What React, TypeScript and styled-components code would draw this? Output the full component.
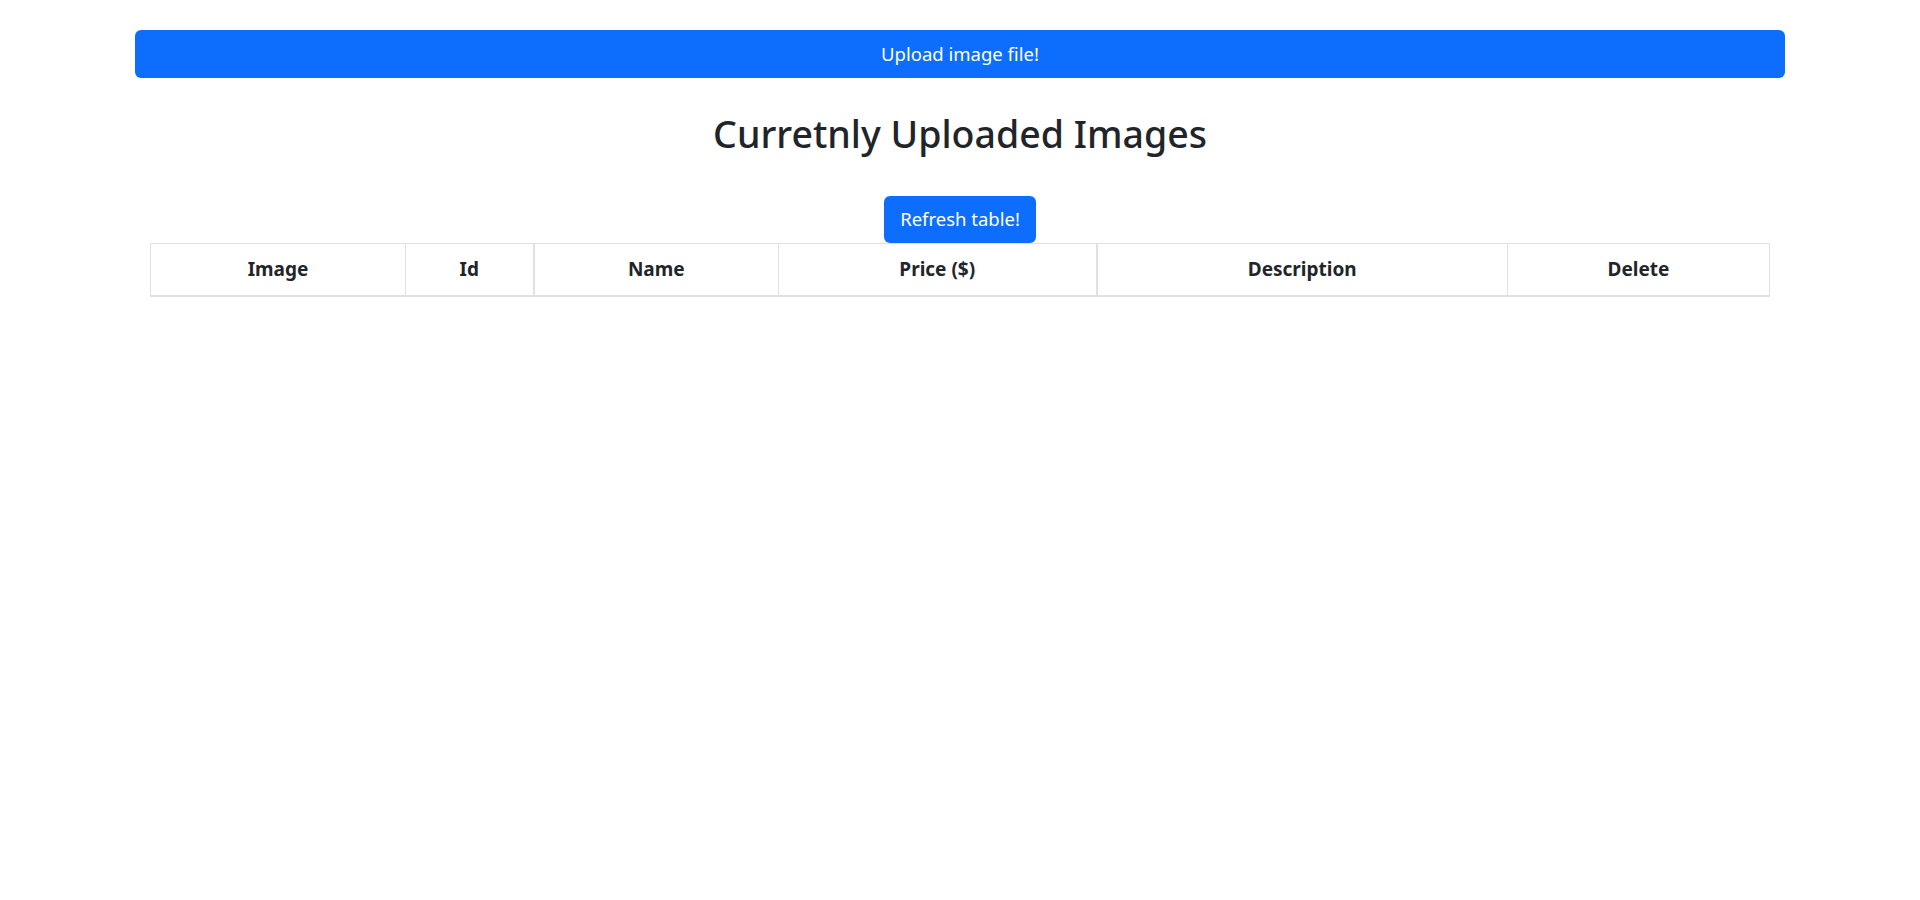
import React from "react";
import styled, { createGlobalStyle } from "styled-components";

const GlobalStyle = createGlobalStyle`
  html, body {
    margin: 0;
    padding: 0;
    background: #ffffff;
  }
  body {
    font-family: "Noto Sans", "Open Sans", "Liberation Sans", sans-serif;
    color: #212529;
  }
  * { box-sizing: border-box; }
`;

const Page = styled.div`
  padding: 30px 135px 0;
  display: flex;
  flex-direction: column;
  align-items: center;
`;

const PrimaryButton = styled.button<{ $block?: boolean }>`
  display: block;
  width: ${(p) => (p.$block ? "100%" : "auto")};
  height: ${(p) => (p.$block ? "48px" : "47px")};
  padding: 0 16px;
  border: none;
  border-radius: 6px;
  background: #0d6efd;
  color: #ffffff;
  font-family: "Noto Sans", "Open Sans", sans-serif;
  font-size: 18.5px;
  line-height: 1;
  cursor: pointer;
`;

const Title = styled.h1`
  margin: 33px 0 40px;
  font-size: 37.5px;
  font-weight: 500;
  line-height: 1.2;
  text-align: center;
`;

const Table = styled.table`
  width: 1619px;
  margin-top: 0;
  border-collapse: collapse;
  table-layout: fixed;
`;

const HeadCell = styled.th<{ $thick?: boolean }>`
  height: 52px;
  padding: 0 8px;
  border-top: 1px solid #dee2e6;
  border-bottom: 2px solid #dee2e6;
  border-left: ${(p) => (p.$thick ? "2px" : "1px")} solid #dee2e6;
  border-right: 1px solid #dee2e6;
  font-size: 19px;
  font-weight: 700;
  text-align: center;
  vertical-align: middle;
  color: #212529;
`;

const columns = [
  { label: "Image", width: 255 },
  { label: "Id", width: 128 },
  { label: "Name", width: 245, thick: true },
  { label: "Price ($)", width: 318 },
  { label: "Description", width: 411, thick: true },
  { label: "Delete", width: 262 },
];

export default function App() {
  return (
    <>
      <GlobalStyle />
      <Page>
        <PrimaryButton $block>Upload image file!</PrimaryButton>
        <Title>Curretnly Uploaded Images</Title>
        <PrimaryButton>Refresh table!</PrimaryButton>
        <Table>
          <colgroup>
            {columns.map((c) => (
              <col key={c.label} style={{ width: c.width }} />
            ))}
          </colgroup>
          <thead>
            <tr>
              {columns.map((c) => (
                <HeadCell key={c.label} $thick={c.thick}>
                  {c.label}
                </HeadCell>
              ))}
            </tr>
          </thead>
          <tbody />
        </Table>
      </Page>
    </>
  );
}
